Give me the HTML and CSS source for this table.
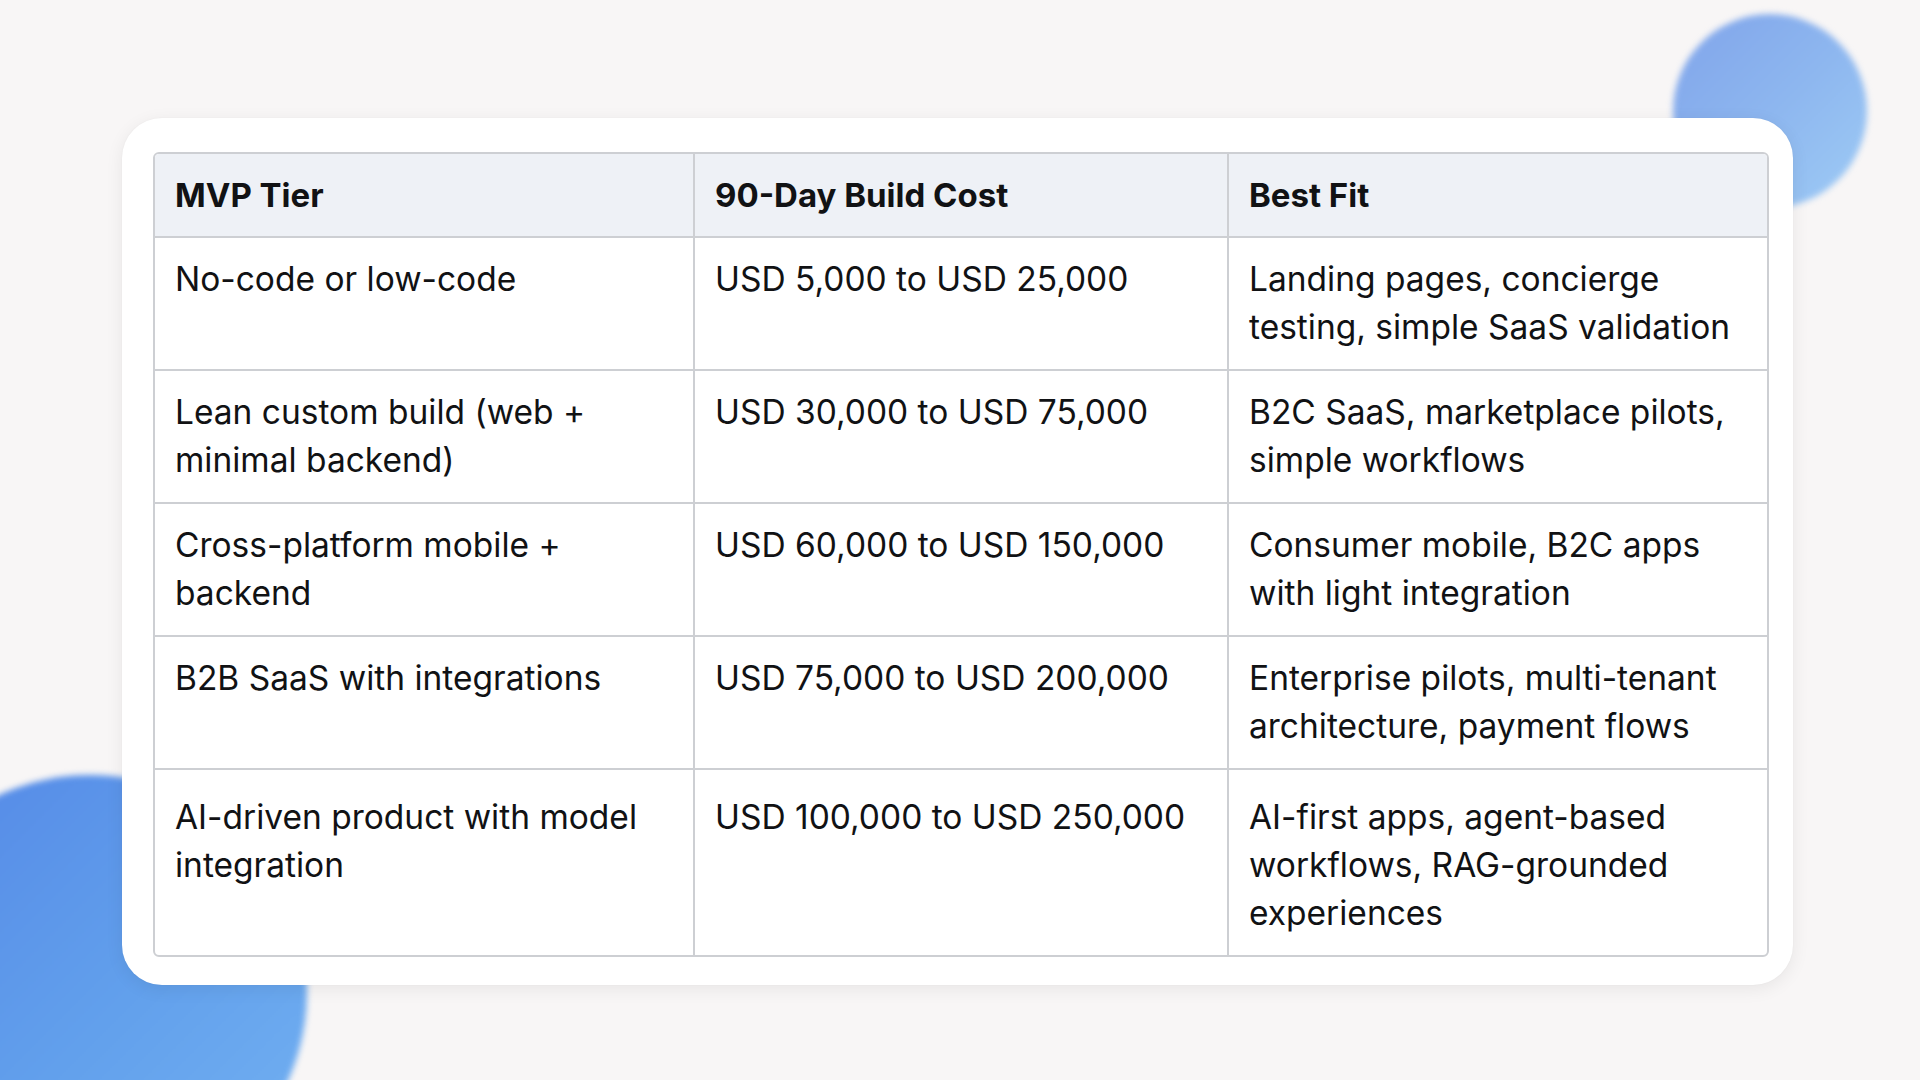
FILE: index.html
```html
<!DOCTYPE html>
<html lang="en">
<head>
<meta charset="utf-8">
<title>MVP Tier Costs</title>
<link rel="stylesheet" href="styles.css">
</head>
<body>
<div class="stage">
  <div class="blob blob-tr"></div>
  <div class="blob blob-bl"></div>
  <main class="card">
    <table class="tiers">
      <colgroup>
        <col class="c1"><col class="c2"><col class="c3">
      </colgroup>
      <thead>
        <tr><th>MVP Tier</th><th>90-Day Build Cost</th><th>Best Fit</th></tr>
      </thead>
      <tbody>
        <tr>
          <td>No-code or low-code</td>
          <td>USD 5,000 to USD 25,000</td>
          <td>Landing pages, concierge<br>testing, simple SaaS validation</td>
        </tr>
        <tr>
          <td>Lean custom build (web +<br>minimal backend)</td>
          <td>USD 30,000 to USD 75,000</td>
          <td>B2C SaaS, marketplace pilots,<br>simple workflows</td>
        </tr>
        <tr>
          <td>Cross-platform mobile +<br>backend</td>
          <td>USD 60,000 to USD 150,000</td>
          <td>Consumer mobile, B2C apps<br>with light integration</td>
        </tr>
        <tr>
          <td>B2B SaaS with integrations</td>
          <td>USD 75,000 to USD 200,000</td>
          <td>Enterprise pilots, multi-tenant<br>architecture, payment flows</td>
        </tr>
        <tr class="last">
          <td>AI-driven product with model<br>integration</td>
          <td>USD 100,000 to USD 250,000</td>
          <td>AI-first apps, agent-based<br>workflows, RAG-grounded<br>experiences</td>
        </tr>
      </tbody>
    </table>
  </main>
</div>
</body>
</html>
```

FILE: styles.css
```css
html, body {
  margin: 0;
  padding: 0;
  overflow: hidden;
}
body {
  background: #f8f6f6;
  font-family: Inter, "Noto Sans", sans-serif;
  color: #111214;
}
.stage {
  position: relative;
  width: 1920px;
  height: 1080px;
  overflow: hidden;
  padding: 118px 0 0 122px;
  box-sizing: border-box;
}
.blob {
  position: absolute;
  border-radius: 50%;
  filter: blur(3px);
  z-index: 0;
}
.blob-tr {
  left: 1673px;
  top: 14px;
  width: 194px;
  height: 194px;
  background: linear-gradient(135deg, #80a4ea 0%, #8db6ef 50%, #9ecbf5 100%);
}
.blob-bl {
  left: -127px;
  top: 775px;
  width: 434px;
  height: 434px;
  background: linear-gradient(135deg, #5386e6 0%, #62a0ec 55%, #74b2f2 100%);
}
.card {
  position: relative;
  z-index: 1;
  width: 1671px;
  box-sizing: border-box;
  background: #ffffff;
  border-radius: 40px;
  padding: 34px 26px 28px 31px;
  box-shadow: 0 4px 18px rgba(0, 0, 0, 0.07), 0 0 2px rgba(0, 0, 0, 0.04);
}
.tiers {
  width: 1612px;
  table-layout: fixed;
  border-collapse: separate;
  border-spacing: 0;
  border: 2px solid #cdcfd3;
  border-radius: 6px;
  overflow: hidden;
  font-size: 33.5px;
  line-height: 48px;
}
.c1 { width: 540px; }
.c2 { width: 534px; }
.c3 { width: 538px; }
.tiers th,
.tiers td {
  text-align: left;
  vertical-align: top;
  padding: 17px 20px 18px 20px;
  border-right: 2px solid #cdcfd3;
  border-bottom: 2px solid #cdcfd3;
}
.tiers th:last-child,
.tiers td:last-child {
  border-right: none;
}
.tiers tr.last td {
  border-bottom: none;
  padding-top: 23px;
}
.tiers th {
  background: #eef1f6;
  font-size: 33px;
  font-weight: 700;
  padding-top: 17px;
  padding-bottom: 17px;
}
.tiers td {
  font-weight: 400;
}
```
